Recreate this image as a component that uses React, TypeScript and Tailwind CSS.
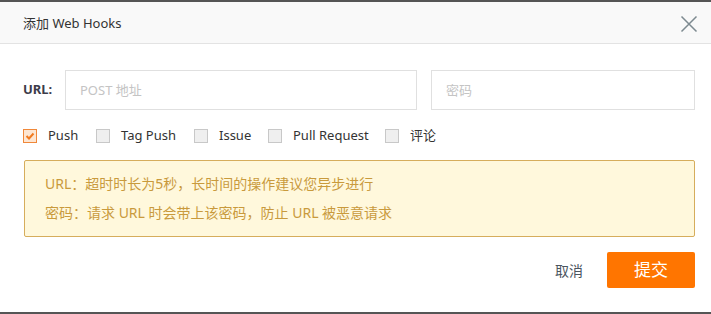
import React from "react";

const font = { fontFamily: '"Noto Sans", "Noto Sans CJK SC", sans-serif' };

function Box({ checked }: { checked?: boolean }) {
  if (checked) {
    return (
      <span className="w-[14px] h-[14px] border border-[#f0883a] bg-[#fde6d2] flex items-center justify-center">
        <svg width="10" height="10" viewBox="0 0 10 10">
          <path d="M1.5 5 L4 7.5 L8.5 2.5" stroke="#f07a20" strokeWidth="2" fill="none" />
        </svg>
      </span>
    );
  }
  return <span className="w-[14px] h-[14px] border border-[#c8c8c8] bg-[#efefef]" />;
}

function Item({ label, checked, w }: { label: string; checked?: boolean; w: string }) {
  return (
    <div className={`flex items-center gap-[11px] ${w}`}>
      <Box checked={checked} />
      <span className="text-[13px] text-[#333]">{label}</span>
    </div>
  );
}

export default function App() {
  return (
    <div style={font} className="w-[711px] h-[314px] border-y-2 border-[#555] bg-white flex flex-col">
      <div className="h-[42px] bg-[#f9f9f9] border-b border-[#e3e3e3] pt-[3px] pl-[23px] pr-[13px] flex items-center justify-between">
        <span className="text-[13px] text-[#333]">添加 Web Hooks</span>
        <svg width="18" height="18" viewBox="0 0 18 18">
          <path d="M1.5 1.5 L16.5 16.5 M16.5 1.5 L1.5 16.5" stroke="#7d8a90" strokeWidth="1.5" />
        </svg>
      </div>
      <div className="pl-[23px] pr-[16px] pt-[26px] flex flex-col">
        <div className="flex items-center">
          <span className="w-[42px] text-[13px] font-bold text-[#3c3c4a]">URL:</span>
          <input
            placeholder="POST 地址"
            className="w-[352px] h-[40px] border border-[#e0e0e0] px-[14px] text-[13px] placeholder:text-[#c4c4c4] outline-none"
          />
          <input
            placeholder="密码"
            className="ml-[14px] w-[264px] h-[40px] border border-[#e0e0e0] px-[14px] text-[13px] placeholder:text-[#c4c4c4] outline-none"
          />
        </div>
        <div className="flex items-center mt-[16px] h-[20px]">
          <Item label="Push" checked w="w-[73px]" />
          <Item label="Tag Push" w="w-[98px]" />
          <Item label="Issue" w="w-[74px]" />
          <Item label="Pull Request" w="w-[117px]" />
          <Item label="评论" w="w-auto" />
        </div>
        <div className="mt-[14px] ml-[1px] h-[77px] border border-[#d6ad5c] bg-[#fff8dc] rounded-[2px] pl-[20px] pt-[13px] flex flex-col gap-[9px] text-[14px] text-[#c99a3c]">
          <span className="leading-[20px]">URL：超时时长为5秒，长时间的操作建议您异步进行</span>
          <span className="leading-[20px]">密码：请求 URL 时会带上该密码，防止 URL 被恶意请求</span>
        </div>
        <div className="mt-[15px] flex items-center justify-end">
          <span className="text-[14px] text-[#4a5560] mr-[24px]">取消</span>
          <button className="w-[88px] h-[36px] bg-[#ff7500] rounded-[2px] text-white text-[17px]">提交</button>
        </div>
      </div>
    </div>
  );
}
